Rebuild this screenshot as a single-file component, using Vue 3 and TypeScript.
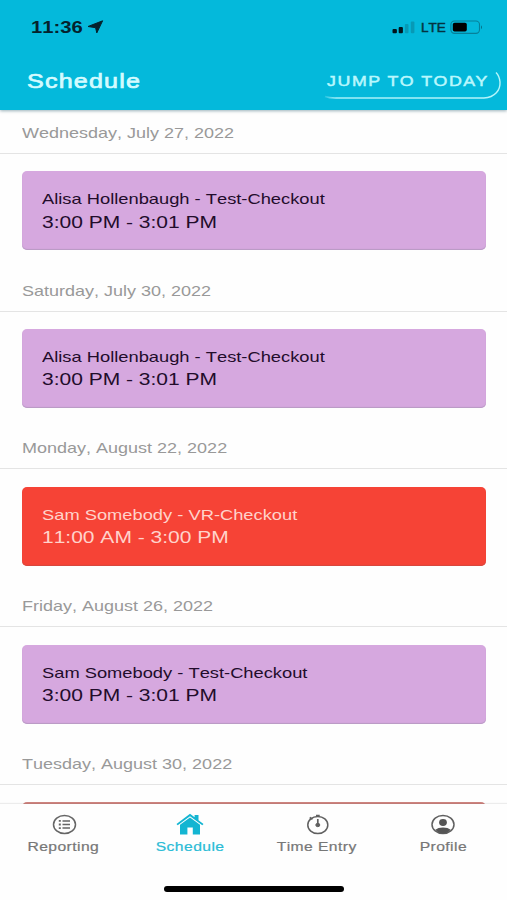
<script setup lang="ts">
interface Day {
  date: string
  title: string
  time: string
  tone: 'purple' | 'red' | 'muted'
}

const days: Day[] = [
  { date: 'Wednesday, July 27, 2022', title: 'Alisa Hollenbaugh - Test-Checkout', time: '3:00 PM - 3:01 PM', tone: 'purple' },
  { date: 'Saturday, July 30, 2022', title: 'Alisa Hollenbaugh - Test-Checkout', time: '3:00 PM - 3:01 PM', tone: 'purple' },
  { date: 'Monday, August 22, 2022', title: 'Sam Somebody - VR-Checkout', time: '11:00 AM - 3:00 PM', tone: 'red' },
  { date: 'Friday, August 26, 2022', title: 'Sam Somebody - Test-Checkout', time: '3:00 PM - 3:01 PM', tone: 'purple' },
  { date: 'Tuesday, August 30, 2022', title: '', time: '', tone: 'muted' },
]
</script>

<template>
  <div class="screen">
    <header class="header">
      <div class="status">
        <div class="clock">
          <span class="wide clock-text">11:36</span>
          <svg class="arrow" width="17" height="14" viewBox="0 0 17 14"><path d="M15.600 .8 9.800 12.900 8.600 7.700 1 6.500Z" fill="#05222c" stroke="#05222c" stroke-width="1" stroke-linejoin="round" /></svg>
        </div>
        <div class="signals">
          <svg width="23" height="13" viewBox="0 0 23 13">
            <rect x="0.5" y="8" width="4.4" height="4.2" rx="1" fill="#02141c" />
            <rect x="6.7" y="6" width="4.2" height="6.2" rx="1" fill="#02141c" />
            <rect x="12.9" y="3" width="3.6" height="9.2" rx="1" fill="#0799b5" />
            <rect x="18.8" y=".5" width="3.6" height="11.7" rx="1" fill="#0799b5" />
          </svg>
          <span class="lte">LTE</span>
          <svg width="34" height="15" viewBox="0 0 34 15">
            <rect x=".9" y="1" width="28.6" height="12.4" rx="3.6" fill="none" stroke="#078099" stroke-width="1.1" />
            <rect x="2.8" y="2.8" width="14" height="8.8" rx="1.8" fill="#000" />
            <path d="M31 5.2q2 2 0 4Z" fill="#076f86" />
          </svg>
        </div>
      </div>
      <div class="toolbar">
        <h1 class="wide heading">Schedule</h1>
        <button class="jump">
          <span class="wide jump-text">JUMP TO TODAY</span>
          <svg class="jump-edge" width="182" height="34" viewBox="0 0 182 34">
            <defs>
              <linearGradient id="edge" gradientUnits="userSpaceOnUse" x1="0" x2="180" y1="0" y2="0">
                <stop offset="0" stop-color="#b5f5fb" stop-opacity="0" />
                <stop offset=".08" stop-color="#b5f5fb" stop-opacity=".9" />
                <stop offset="1" stop-color="#b5f5fb" />
              </linearGradient>
            </defs>
            <path d="M3 29.500Q7 31 13 31H162C173 30.500 178.500 23 178 15Q177.500 9 174 5.500" fill="none" stroke="url(#edge)" stroke-width="1.4" />
          </svg>
        </button>
      </div>
    </header>

    <main class="list">
      <section v-for="day in days" :key="day.date" class="day">
        <h2 class="date"><span class="wide date-text">{{ day.date }}</span></h2>
        <article class="card" :class="day.tone">
          <div class="wide card-title">{{ day.title }}</div>
          <div class="wide card-time">{{ day.time }}</div>
        </article>
      </section>
    </main>

    <nav class="tabs">
      <a class="tab">
        <svg width="28" height="24" viewBox="0 0 28 24" fill="none" stroke="#666">
          <ellipse cx="14.500" cy="12.500" rx="11" ry="9.100" stroke-width="1.500" />
          <path d="M12.500 8.900h7.500M12.500 12.500h7.500M12.500 16.100h7.500" stroke-width="1.500" />
          <path d="M8.800 8.900h2M8.800 12.500h2M8.800 16.100h2" stroke-width="1.800" />
        </svg>
        <span class="wide label">Reporting</span>
      </a>
      <a class="tab active">
        <svg width="28" height="24" viewBox="0 0 28 24" fill="#13b5d2">
          <path d="M14 1.700 18.600 5.200V3H22.500V8.200L27.500 12 26.300 13.200 14 4.300 1.700 13.200.500 12Z" />
          <path d="M14 5.500 24 12.800V22.500H16.800V15.500H11.400V22.500H4V12.800Z" />
        </svg>
        <span class="wide label">Schedule</span>
      </a>
      <a class="tab">
        <svg width="28" height="24" viewBox="0 0 28 24" fill="none" stroke="#606060">
          <ellipse cx="14.800" cy="13" rx="10" ry="8.600" stroke-width="1.500" />
          <path d="M14.800 7V13M13 3.500H16.700M6.700 5.500 9.500 7.200" stroke-width="1.700" />
          <ellipse cx="14.800" cy="13" rx="2" ry="1.700" fill="#606060" stroke-width="1" />
        </svg>
        <span class="wide label">Time Entry</span>
      </a>
      <a class="tab">
        <svg width="28" height="24" viewBox="0 0 28 24">
          <ellipse cx="14" cy="12.500" rx="11" ry="9.100" fill="none" stroke="#606060" stroke-width="1.500" />
          <ellipse cx="14" cy="10.500" rx="3.900" ry="3.400" fill="#555" />
          <path d="M6.300 17.800Q9 15.600 14 15.600T21.700 17.800Q18.500 21.500 14 21.500T6.300 17.800Z" fill="#555" />
        </svg>
        <span class="wide label">Profile</span>
      </a>
      <div class="home-bar"></div>
    </nav>
  </div>
</template>

<style>
body {
  margin: 0;
  background: #fefefe;
}
</style>

<style scoped>
.screen {
  display: flex;
  flex-direction: column;
  width: 507px;
  height: 900px;
  overflow: hidden;
  background: #fefefe;
  font-family: "Liberation Sans", Arial, sans-serif;
  font-kerning: none;
}
.wide {
  display: inline-block;
  white-space: nowrap;
  transform: scaleX(1.225);
  transform-origin: left center;
}
.header {
  position: relative;
  z-index: 2;
  flex: none;
  height: 110px;
  background: #04b9db;
  box-shadow: 0 1px 3px rgba(0, 60, 80, 0.4);
}
.status {
  display: flex;
  justify-content: space-between;
  align-items: center;
  height: 54px;
  padding: 0 23px 0 31px;
  box-sizing: border-box;
}
.clock {
  display: flex;
  align-items: center;
}
.clock-text {
  width: 56px;
  padding-top: 1px;
  font-size: 17px;
  font-weight: 700;
  color: #05222c;
  transform: scaleX(1.19);
}
.signals {
  display: flex;
  align-items: center;
}
.lte {
  width: 29px;
  margin-left: 6px;
  font-size: 13.5px;
  color: #043340;
  -webkit-text-stroke: 0.5px #043340;
}
.toolbar {
  display: flex;
  justify-content: space-between;
  align-items: center;
  height: 54px;
  padding: 0 3px 0 26.5px;
}
.heading {
  margin: 0;
  font-size: 20.5px;
  font-weight: 400;
  letter-spacing: 0.95px;
  color: #d4fbff;
  -webkit-text-stroke: 0.7px #d4fbff;
}
.jump {
  position: relative;
  width: 177px;
  height: 34px;
  padding: 0;
  border: 0;
  background: none;
  font-family: inherit;
  text-align: left;
}
.jump-text {
  font-size: 14.5px;
  letter-spacing: 1.3px;
  color: #b9f7fd;
  -webkit-text-stroke: 0.5px #b9f7fd;
}
.jump-edge {
  position: absolute;
  left: -5px;
  top: 3px;
}
.list {
  flex: 1;
  min-height: 0;
  margin-top: -17px;
  overflow: hidden;
}
.day {
  height: 157.75px;
}
.date {
  display: flex;
  align-items: flex-end;
  height: 60.75px;
  margin: 0;
  padding: 0 21.5px 11px;
  box-sizing: border-box;
  border-bottom: 1.5px solid #e4e4e4;
  font-size: 15px;
  line-height: 18px;
  font-weight: 400;
  color: #999;
}
.date-text {
  transform: scaleX(1.2);
}
.card {
  height: 79px;
  margin: 17.5px 21px 0 22px;
  padding: 16px 20px 0;
  box-sizing: border-box;
  border-radius: 5px;
  line-height: 23px;
}
.card .wide {
  display: block;
}
.purple {
  background: #d6a8df;
  box-shadow: inset 0 -1px 1px #b99ac4;
  color: #220c2b;
}
.red {
  background: #f64336;
  box-shadow: inset 0 -1px 1px #d5493f;
  color: #ffd3cb;
}
.muted {
  background: #d08580;
}
.card .card-title {
  font-size: 15px;
  transform: scaleX(1.22);
}
.card .card-time {
  margin-top: 0.4px;
  font-size: 17px;
  transform: scaleX(1.235);
}
.tabs {
  position: relative;
  z-index: 1;
  display: grid;
  grid-template-columns: repeat(4, 126.5px);
  flex: none;
  height: 96px;
  background: #fefefe;
  box-shadow: 0 -1px 1px rgba(0, 0, 0, 0.07);
}
.tab {
  display: flex;
  flex-direction: column;
  align-items: center;
  padding: 8px 0 0 0.5px;
  color: #777;
}
.label {
  font-size: 12.8px;
  line-height: 15px;
  margin-top: 3px;
  letter-spacing: 0.35px;
  transform-origin: center;
  -webkit-text-stroke: 0.2px currentColor;
}
.active {
  color: #2bbcd6;
}
.home-bar {
  position: absolute;
  left: 164px;
  bottom: 8px;
  width: 180px;
  height: 6px;
  border-radius: 3px;
  background: #000;
}
</style>
